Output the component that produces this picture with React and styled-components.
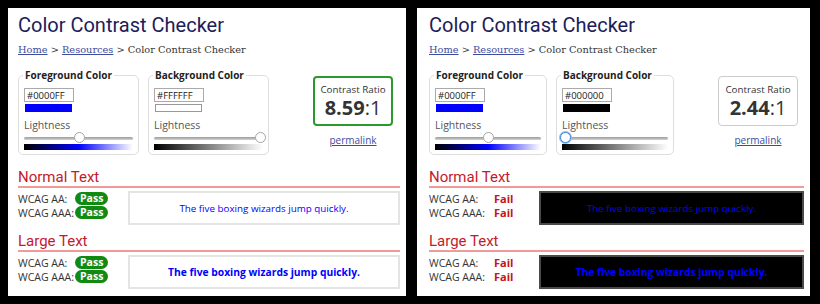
import React from 'react'
import styled, { createGlobalStyle } from 'styled-components'

const GlobalStyle = createGlobalStyle`
  html, body {
    margin: 0;
    padding: 0;
    background: #000;
  }
  body {
    font-family: "Open Sans", "Liberation Sans", sans-serif;
  }
`

const Page = styled.div`
  display: flex;
  gap: 11px;
  padding: 8px;
  height: 304px;
  box-sizing: border-box;
`

const Panel = styled.div`
  width: ${props => props.width}px;
  height: 288px;
  background: #fff;
  box-sizing: border-box;
  padding: 5px 6px 0 ${props => props.padLeft}px;
  overflow: hidden;
`

const Title = styled.h1`
  margin: 0;
  font-family: Roboto, "Liberation Sans", sans-serif;
  font-weight: 400;
  font-size: 20px;
  line-height: 25px;
  color: #1d2058;
`

const Crumbs = styled.div`
  margin-top: 4px;
  font-family: "DejaVu Serif", "Liberation Serif", serif;
  font-size: 9.8px;
  line-height: 16px;
  color: #333;
  a {
    color: #3c4c9e;
    text-decoration: underline;
  }
`

const Controls = styled.div`
  display: flex;
  align-items: flex-start;
  margin-top: 10px;
`

const ColorSet = styled.fieldset`
  width: ${props => props.width}px;
  box-sizing: border-box;
  margin: 0 9px 0 0;
  padding: 0 5px 4px;
  border: 1px solid #ddd;
  border-radius: 5px;
  legend {
    padding: 0 2px;
    margin-left: -1px;
    font-size: 10px;
    line-height: 14px;
    font-weight: 700;
    color: #222;
  }
`

const HexInput = styled.input`
  display: block;
  width: 50px;
  height: 14px;
  box-sizing: border-box;
  margin-top: 6px;
  padding: 0 2px;
  border: 1px solid #aaa;
  font-family: "Open Sans", "Liberation Sans", sans-serif;
  font-size: 9.5px;
  color: #222;
  outline: none;
`

const Swatch = styled.div`
  width: 47px;
  height: 8px;
  margin-top: 2px;
  margin-left: 1px;
  box-sizing: border-box;
  background: ${props => props.color};
  border: 1px solid ${props => props.color === '#FFFFFF' ? '#999' : props.color};
`

const Label = styled.div`
  margin-top: 6px;
  font-size: 10.5px;
  line-height: 14px;
  color: #555;
`

const SliderRow = styled.div`
  position: relative;
  height: 12px;
  display: flex;
  align-items: center;
`

const Track = styled.div`
  width: 100%;
  height: 3px;
  border-radius: 2px;
  background: linear-gradient(#9a9a9a, #d4d4d4);
`

const Thumb = styled.div`
  position: absolute;
  top: 0;
  width: 11px;
  height: 11px;
  margin-left: -5px;
  box-sizing: border-box;
  border-radius: 50%;
  background: #fff;
  border: 1px solid ${props => props.focused ? '#3d86d9' : '#a5a5a5'};
  box-shadow: ${props => props.focused ? '0 0 0 1px #8cbdf0' : 'none'};
`

const Ramp = styled.div`
  height: 6px;
  background: ${props => props.gradient};
`

const Result = styled.div`
  margin-left: 35px;
  margin-top: 8px;
  display: flex;
  flex-direction: column;
  align-items: center;
`

const RatioBox = styled.div`
  width: 80px;
  height: 50px;
  box-sizing: border-box;
  border: ${props => props.good ? '2px solid #2a9a2a' : '1px solid #ccc'};
  border-radius: 4px;
  display: flex;
  flex-direction: column;
  align-items: center;
  justify-content: center;
  color: #333;
  .caption {
    font-size: 9.8px;
    line-height: 13px;
  }
  .ratio {
    font-size: 20px;
    line-height: 23px;
    b {
      font-weight: 700;
    }
  }
`

const Permalink = styled.a`
  margin-top: 7px;
  font-size: 10px;
  color: #3c4c9e;
  text-decoration: underline;
`

const Heading = styled.h2`
  margin: ${props => props.first ? '13px' : '7px'} 0 0;
  font-family: Roboto, "Liberation Sans", sans-serif;
  font-weight: 400;
  font-size: 15px;
  line-height: 18px;
  color: #c41a2c;
  border-bottom: 2px solid #f09a9a;
`

const Section = styled.div`
  display: flex;
  margin-top: 3px;
`

const Checks = styled.div`
  width: 110px;
  display: flex;
  flex-direction: column;
  gap: 1px;
  padding-top: 1px;
`

const Check = styled.div`
  display: flex;
  align-items: center;
  height: 13px;
  font-size: 10.5px;
  color: #333;
  .name {
    width: 57px;
  }
`

const Pill = styled.span`
  height: 13px;
  padding: 0 5px;
  border-radius: 7px;
  background: #118a11;
  color: #fff;
  font-size: 10.5px;
  font-weight: 700;
  line-height: 13px;
`

const FailText = styled.span`
  margin-left: 8px;
  color: #c8101e;
  font-size: 11px;
  font-weight: 700;
`

const Sample = styled.div`
  flex: 1;
  height: 34px;
  box-sizing: border-box;
  display: flex;
  align-items: center;
  justify-content: center;
  background: ${props => props.bg};
  border: 2px solid ${props => props.bg === '#000000' ? '#4a4a4a' : '#e4e4e4'};
  color: ${props => props.fg};
  font-size: ${props => props.large ? '10.3px' : '9.8px'};
  font-weight: ${props => props.large ? 700 : 400};
`

const pangram = 'The five boxing wizards jump quickly.'

const ColorField = ({legend, hex, width, thumb, focused, gradient}) => (
  <ColorSet width={width}>
    <legend>{legend}</legend>
    <HexInput readOnly value={hex} />
    <Swatch color={hex} />
    <Label>Lightness</Label>
    <SliderRow>
      <Track />
      <Thumb focused={focused} style={{left: `${thumb}%`}} />
    </SliderRow>
    <Ramp gradient={gradient} />
  </ColorSet>
)

const CheckList = ({pass}) => (
  <Checks>
    {['WCAG AA:', 'WCAG AAA:'].map(name => (
      <Check key={name}>
        <span className='name'>{name}</span>
        {pass ? <Pill>Pass</Pill> : <FailText>Fail</FailText>}
      </Check>
    ))}
  </Checks>
)

const Checker = ({data}) => (
  <Panel width={data.width} padLeft={data.padLeft}>
    <Title>Color Contrast Checker</Title>
    <Crumbs>
      <a>Home</a> &gt; <a>Resources</a> &gt; Color Contrast Checker
    </Crumbs>
    <Controls>
      <ColorField
        legend='Foreground Color'
        hex='#0000FF'
        width={data.setWidth}
        thumb={50}
        gradient='linear-gradient(to right, #000 0%, #0000ff 50%, #ffffff 100%)'
      />
      <ColorField
        legend='Background Color'
        hex={data.bg}
        width={data.setWidth}
        thumb={data.bgThumb}
        focused={data.focused}
        gradient='linear-gradient(to right, #000, #fff)'
      />
      <Result>
        <RatioBox good={data.pass}>
          <span className='caption'>Contrast Ratio</span>
          <span className='ratio'><b>{data.ratio}</b>:1</span>
        </RatioBox>
        <Permalink>permalink</Permalink>
      </Result>
    </Controls>
    <Heading first>Normal Text</Heading>
    <Section>
      <CheckList pass={data.pass} />
      <Sample bg={data.bg} fg='#0000FF'>{pangram}</Sample>
    </Section>
    <Heading>Large Text</Heading>
    <Section>
      <CheckList pass={data.pass} />
      <Sample bg={data.bg} fg='#0000FF' large>{pangram}</Sample>
    </Section>
  </Panel>
)

const panels = [
  {width: 398, padLeft: 10, setWidth: 121, bg: '#FFFFFF', bgThumb: 97, ratio: '8.59', pass: true},
  {width: 393, padLeft: 12, setWidth: 118, bg: '#000000', bgThumb: 3, ratio: '2.44', pass: false, focused: true},
]

const App = () => {
  return (
    <>
      <GlobalStyle />
      <Page>
        {panels.map((p, i) => <Checker key={i} data={p} />)}
      </Page>
    </>
  )
}

export default App
